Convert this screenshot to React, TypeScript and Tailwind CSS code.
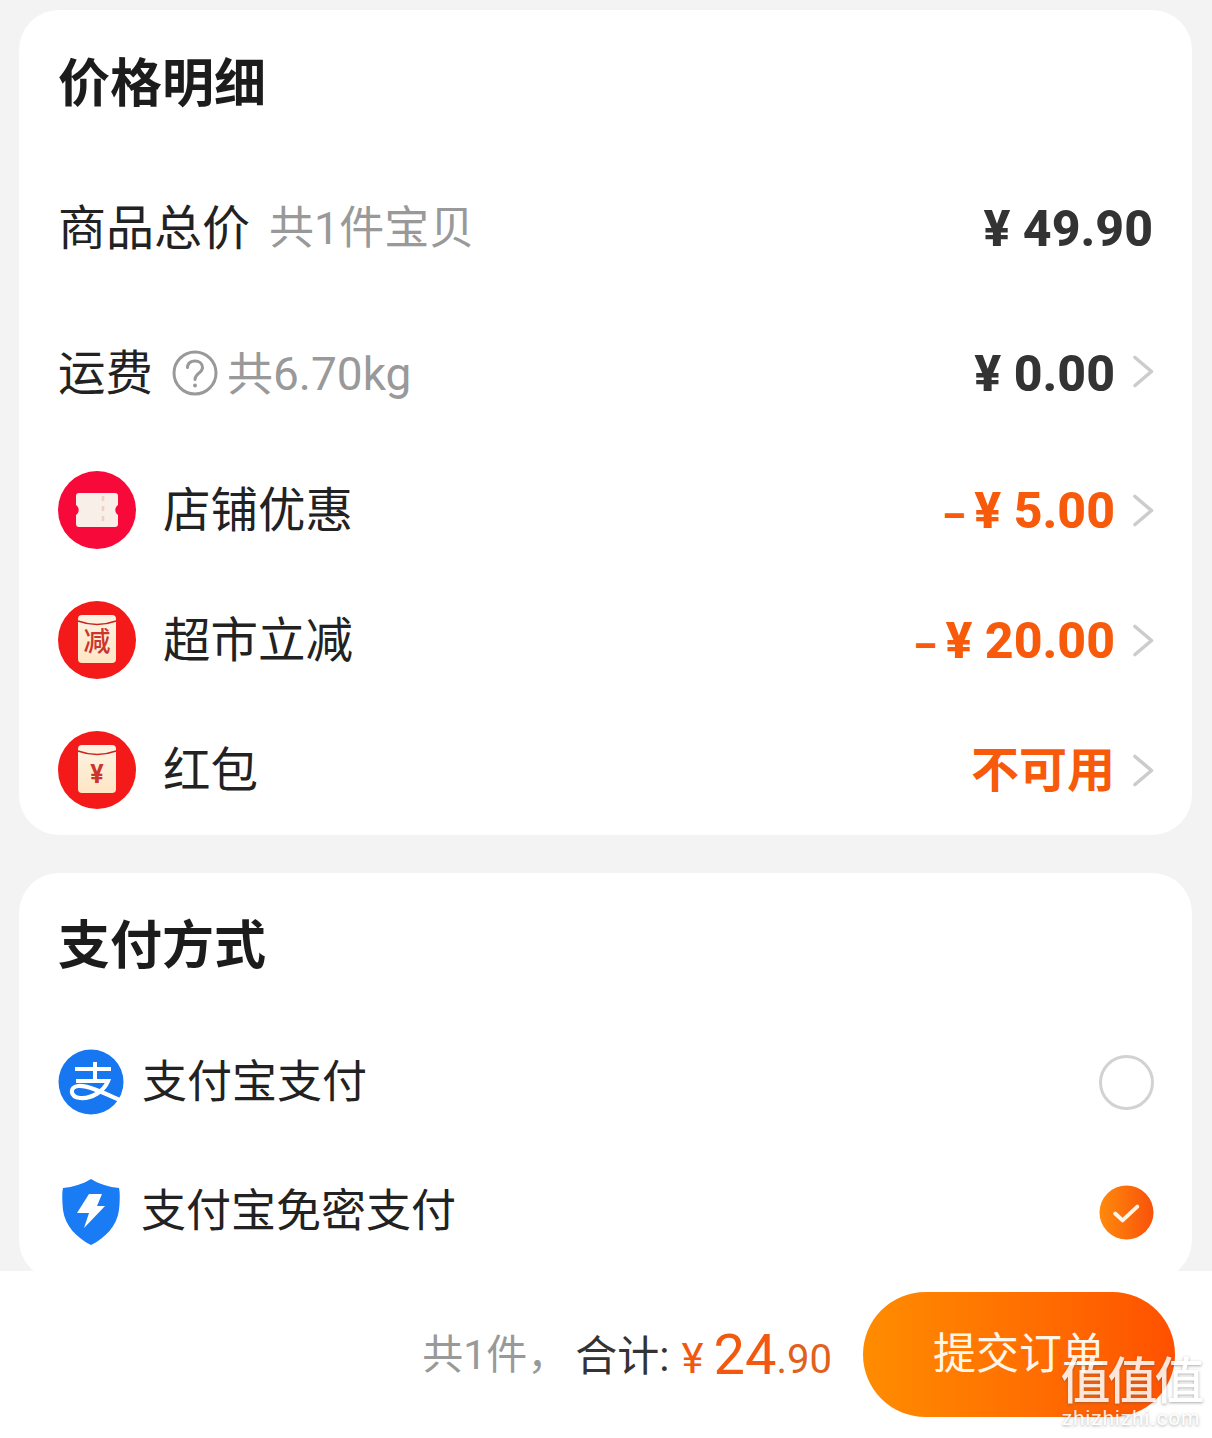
import React from "react";

const F = "font-['Roboto','Noto_Sans_CJK_SC',sans-serif]";

function Chevron({ up }: { up?: boolean }) {
  return (
    <svg width="21" height="33" viewBox="0 0 21 33" className={`shrink-0 ${up ? "mb-[3px]" : ""}`} fill="none">
      <path d="M2 2.5 L18.5 16.5 L2 30.5" stroke="#cccccc" strokeWidth="3.6" strokeLinecap="round" strokeLinejoin="round" />
    </svg>
  );
}

function Ticket() {
  return (
    <svg width="78" height="78" viewBox="0 0 78 78" className="shrink-0">
      <circle cx="39" cy="39" r="39" fill="#f7093a" />
      <path d="M21 22 h36 a3 3 0 0 1 3 3 v9 a6 6 0 0 0 0 10 v9 a3 3 0 0 1 -3 3 h-36 a3 3 0 0 1 -3 -3 v-9 a6 6 0 0 0 0 -10 v-9 a3 3 0 0 1 3 -3 z" fill="#f8efe9" />
      <path d="M45 25 v28" stroke="#efcfc6" strokeWidth="2.6" strokeDasharray="5 5" />
    </svg>
  );
}

function Envelope({ children, top }: { children: React.ReactNode; top: string }) {
  return (
    <div className="relative w-[78px] h-[78px] shrink-0">
      <svg width="78" height="78" viewBox="0 0 78 78" className="block">
        <defs>
          <linearGradient id="env" x1="0" y1="0" x2="0" y2="1">
            <stop offset="0" stopColor="#fdf3e4" />
            <stop offset="1" stopColor="#fde6c4" />
          </linearGradient>
        </defs>
        <circle cx="39" cy="39" r="39" fill="#f41a1a" />
        <rect x="20" y="14" width="38" height="48" rx="4" fill="url(#env)" />
        <path d="M20 20 Q39 27 58 20" fill="none" stroke="#c8261f" strokeWidth="1.5" />
      </svg>
      <div className={`absolute inset-x-0 ${top} flex justify-center`}>{children}</div>
    </div>
  );
}

function Alipay() {
  return (
    <svg width="66" height="66" viewBox="0 0 66 66" className="shrink-0">
      <circle cx="33" cy="33" r="32.5" fill="#1677f0" />
      <g fill="none" stroke="#ffffff" strokeLinecap="butt">
        <path d="M17 20 H53" strokeWidth="4" />
        <path d="M37 13 V32" strokeWidth="4" />
        <path d="M18 32 H50 C46 42 34 50 22 49 C12 48 11 38 20 37 C30 36 48 45 64 52" strokeWidth="4.2" />
      </g>
    </svg>
  );
}

function Shield() {
  return (
    <svg width="60" height="68" viewBox="0 0 60 68" className="shrink-0">
      <path d="M30 1 C38 6 48 9 58 10 C59 14 59 22 58 32 C56 48 44 60 30 67 C16 60 4 48 2 32 C1 22 1 14 2 10 C12 9 22 6 30 1 Z" fill="#1a7cf5" />
      <path d="M28 16 H41 L36 28 H44 L23 50 L28 35 H16 Z" fill="#ffffff" />
    </svg>
  );
}

function Row({ h, left, right, chevron = true, up, pr = "pr-[38px]" }: { h: string; left: React.ReactNode; right: React.ReactNode; chevron?: boolean; up?: boolean; pr?: string }) {
  return (
    <div className={`${h} flex items-center justify-between pl-[39px] ${pr}`}>
      <div className="flex items-center min-w-0">{left}</div>
      <div className="flex items-center gap-[18px]">
        {right}
        {chevron ? <Chevron up={up} /> : null}
      </div>
    </div>
  );
}

function Price({ children, orange }: { children: React.ReactNode; orange?: boolean }) {
  return (
    <span className={`mt-[2px] text-[50px] leading-none font-extrabold whitespace-pre ${orange ? "text-[#f75a0a]" : "text-[#333333]"}`}>{children}</span>
  );
}

function Minus() {
  return <span className="text-[37px] leading-none font-black">{"– "}</span>;
}

function Radio({ checked }: { checked?: boolean }) {
  if (checked) {
    return (
      <svg width="55" height="55" viewBox="0 0 56 56" className="shrink-0">
        <defs>
          <linearGradient id="chk" x1="0" y1="0" x2="1" y2="0">
            <stop offset="0" stopColor="#ff8a0c" />
            <stop offset="1" stopColor="#f9520a" />
          </linearGradient>
        </defs>
        <circle cx="28" cy="28" r="27.5" fill="url(#chk)" />
        <path d="M16.5 29 L24 36 L39 22" fill="none" stroke="#fff6e6" strokeWidth="4" strokeLinecap="round" strokeLinejoin="round" />
      </svg>
    );
  }
  return <div className="w-[55px] h-[55px] rounded-full border-[3px] border-[#d2d2d2] shrink-0" />;
}

const label = "ml-[27px] mt-[3px] text-[47.5px] text-[#222222]";
const title = "h-[145px] flex items-center pt-[4px] pl-[39px] text-[52px] font-bold text-[#1c1c1c]";

export default function App() {
  return (
    <div className={`${F} relative w-[1212px] h-[1438px] overflow-hidden bg-[#f3f3f3] flex flex-col`}>
      <main className="h-[1271px] overflow-hidden pt-[10px] px-[19px] flex flex-col gap-[38px]">
        <section className="shrink-0 w-[1173px] bg-white rounded-[40px]">
          <div className={title}>价格明细</div>
          <Row
            h="h-[146px]"
            chevron={false}
            pr="pr-[39px]"
            left={
              <>
                <span className="mt-[2px] text-[48px] text-[#222222]">商品总价</span>
                <span className="ml-[19px] mt-[2px] text-[45px] text-[#999999]">共1件宝贝</span>
              </>
            }
            right={<Price>¥ 49.90</Price>}
          />
          <Row
            h="h-[144px]"
            up
            left={
              <>
                <span className="mt-[3px] text-[47.5px] text-[#222222]">运费</span>
                <svg width="46" height="46" viewBox="0 0 46 46" className="ml-[19px] shrink-0" fill="none">
                  <circle cx="23" cy="23" r="21" stroke="#999999" strokeWidth="3" />
                  <path d="M15.5 17.5 C15.5 8.5 30.5 9 30.5 17.5 C30.5 23 23 23.5 23 29.5" stroke="#999999" strokeWidth="3" strokeLinecap="round" />
                  <circle cx="23" cy="35.5" r="2" fill="#999999" />
                </svg>
                <span className="ml-[9px] mt-[3px] text-[46px] text-[#999999]">共6.70kg</span>
              </>
            }
            right={<Price>¥ 0.00</Price>}
          />
          <Row
            h="h-[130px]"
            left={
              <>
                <Ticket />
                <span className={label}>店铺优惠</span>
              </>
            }
            right={<Price orange><Minus />{"¥ 5.00"}</Price>}
          />
          <Row
            h="h-[130px]"
            left={
              <>
                <Envelope top="top-[28px]">
                  <span className="text-[27px] leading-none font-medium text-[#cc352c]">减</span>
                </Envelope>
                <span className={label}>超市立减</span>
              </>
            }
            right={<Price orange><Minus />{"¥ 20.00"}</Price>}
          />
          <Row
            h="h-[130px]"
            left={
              <>
                <Envelope top="top-[31px]">
                  <span className="text-[25px] leading-none font-bold text-[#cc352c]">¥</span>
                </Envelope>
                <span className={label}>红包</span>
              </>
            }
            right={<span className="mt-[2px] text-[48px] leading-none font-bold text-[#f75a0a]">不可用</span>}
          />
        </section>

        <section className="shrink-0 w-[1173px] bg-white rounded-[40px] pb-[3px]">
          <div className="h-[144px] flex items-center pt-[4px] pl-[39px] text-[52px] font-bold text-[#1c1c1c]">支付方式</div>
          <div className="h-[130px] flex items-center justify-between pl-[39px] pr-[38px]">
            <div className="flex items-center">
              <Alipay />
              <span className="ml-[18px] mt-[2px] text-[45px] text-[#222222]">支付宝支付</span>
            </div>
            <Radio />
          </div>
          <div className="h-[130px] flex items-center justify-between pl-[42px] pr-[38px]">
            <div className="flex items-center">
              <Shield />
              <span className="ml-[20px] text-[45px] text-[#222222]">支付宝免密支付</span>
            </div>
            <Radio checked />
          </div>
        </section>
      </main>

      <footer className="h-[167px] bg-white flex items-start justify-end pt-[21px] pr-[37px]">
        <div className="h-[125px] flex items-center">
          <span className="mt-[3px] text-[41px] text-[#999999]">共1件，</span>
          <span className="ml-[7px] mt-[3px] text-[42px] text-[#333333]">合计:</span>
          <span className="ml-[12px] mt-[8px] text-[42px] leading-none text-[#f2590f]">¥</span>
          <span className="ml-[10px] text-[56px] leading-none text-[#f2590f]">24</span>
          <span className="mt-[10px] text-[40px] leading-none text-[#e0601c]">.90</span>
          <button className="ml-[31px] w-[312px] h-[125px] rounded-full bg-gradient-to-r from-[#ff8c00] to-[#ff5000] text-[43px] text-[#fff6ea]">提交订单</button>
        </div>
      </footer>

      <div className="absolute right-[10px] bottom-[9px] w-[142px] flex flex-col items-center text-white [text-shadow:0_1px_3px_rgba(90,90,90,0.6)]">
        <span className="text-[50px] leading-[50px] font-medium tracking-[-3px] whitespace-nowrap opacity-85">值值值</span>
        <span className="text-[21px] leading-[22px] tracking-[0.8px] whitespace-nowrap opacity-85">zhizhizhi.com</span>
      </div>
    </div>
  );
}
